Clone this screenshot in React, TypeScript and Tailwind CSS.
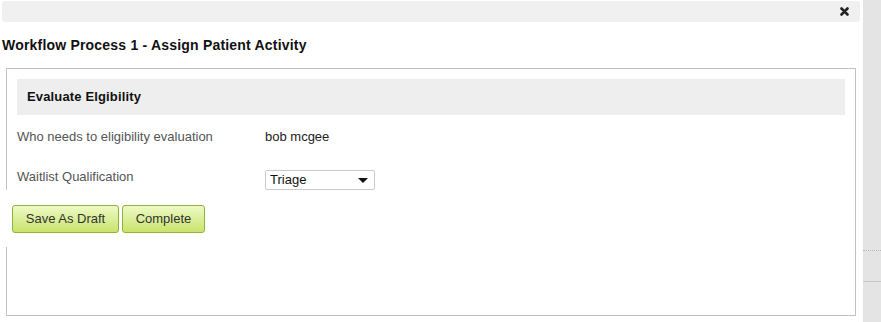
import React from "react";

const labelCls = "w-[248px] shrink-0 text-[#555555]";

const App = () => {
  return (
    <div className="flex w-[881px] h-[322px] bg-white text-[13px] leading-[16px] font-['Liberation_Sans',Arial,sans-serif] overflow-hidden">
      <div className="w-[863px] shrink-0">
        {/* title bar */}
        <div className="mt-[1px] ml-[2px] mr-[3px] h-[21px] rounded-[3px] bg-[#f0f0f0] flex items-center justify-end pr-[11px]">
          <svg width="9" height="9" viewBox="0 0 9 9">
            <path d="M1.5 1.5 L7.5 7.5 M7.5 1.5 L1.5 7.5" stroke="#222" strokeWidth="2.6" strokeLinecap="round" />
          </svg>
        </div>

        <h1 className="mt-[15px] ml-[2px] text-[14px] tracking-[0.2px] font-bold text-[#111111]">
          Workflow Process 1 - Assign Patient Activity
        </h1>

        {/* form box */}
        <div className="mt-[15px] ml-[6px] w-[850px] h-[248px] border border-[#c2c2c2] px-[10px] pt-[10px]">
          <div className="h-[36px] bg-[#eeeeee] flex items-center pl-[10px] font-bold tracking-[0.15px] text-[#111111]">
            Evaluate Elgibility
          </div>

          <div className="h-[44px] flex items-center">
            <span className={labelCls}>Who needs to eligibility evaluation</span>
            <span className="text-[#222222]">bob mcgee</span>
          </div>

          <div className="h-[31px] flex items-start">
            <span className={`${labelCls} mt-[10px]`}>Waitlist Qualification</span>
            <div className="mt-[11px] w-[110px] h-[20px] border border-[#cacaca] rounded-[2px] flex items-center justify-between pl-[4px] pr-[6px] text-[#111111]">
              <span>Triage</span>
              <svg width="10" height="5" viewBox="0 0 10 5">
                <path d="M0 0 H10 L5 5 Z" fill="#111" />
              </svg>
            </div>
          </div>

          {/* buttons sit over the left border */}
          <div className="-ml-[11px] w-fit bg-white h-[57px] pl-[6px] pr-[4px] pt-[15px] flex items-start gap-[3px]">
            <button className="h-[28px] w-[107px] rounded-[3px] border border-[#8fb33a] bg-gradient-to-b from-[#eef9c4] to-[#c8e46a] text-[#333333]">
              Save As Draft
            </button>
            <button className="h-[28px] w-[83px] rounded-[3px] border border-[#8fb33a] bg-gradient-to-b from-[#eef9c4] to-[#c8e46a] text-[#333333]">
              Complete
            </button>
          </div>
        </div>
      </div>

      {/* side strip */}
      <div className="flex-1 bg-[#e4e4e4] flex flex-col">
        <div className="h-[250px]" />
        <div className="border-t border-dotted border-[#b8b8b8]" />
        <div className="h-[30px]" />
        <div className="border-t border-[#c8c8c8]" />
      </div>
    </div>
  );
};

export default App;
